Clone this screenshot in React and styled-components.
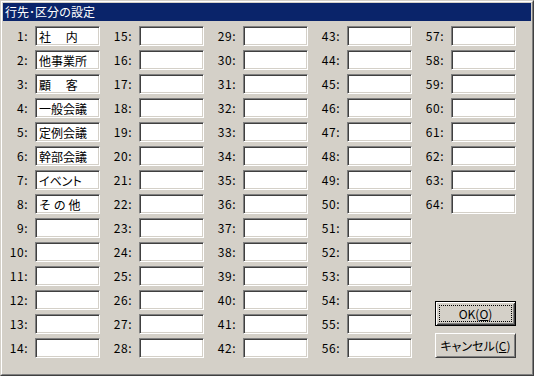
import React from 'react';
import styled, { createGlobalStyle } from 'styled-components';

const GlobalStyle = createGlobalStyle`
  html, body {
    margin: 0;
    padding: 0;
    background: #d4d0c8;
  }
  body {
    font-family: "Noto Sans CJK JP", "DejaVu Sans", sans-serif;
    font-size: 12px;
  }
`

const entries = {
    1: '社　 内',
    2: '他事業所',
    3: '顧　 客',
    4: '一般会議',
    5: '定例会議',
    6: '幹部会議',
    7: 'イベント',
    8: 'そ の 他',
}

// five columns: 1-14, 15-28, 29-42, 43-56, 57-64
const columns = [
    [1, 14],
    [15, 28],
    [29, 42],
    [43, 56],
    [57, 64],
]

const range = (a, b) => {
    const out = []
    for (let i = a; i <= b; i++) out.push(i)
    return out
}

function App() {
    return (
        <Window>
            <GlobalStyle />
            <Frame>
                <TitleBar>
                    <Title>行先･区分の設定</Title>
                </TitleBar>
                <Body>
                    {columns.map(([from, to], ci) => (
                        <Column key={ci}>
                            {range(from, to).map((n) => (
                                <Entry key={n}>
                                    <Label>{n}:</Label>
                                    <Field $kana={n === 7}>{entries[n] || ''}</Field>
                                </Entry>
                            ))}
                            {ci === 4 && (
                                <ButtonStack>
                                    <Button $default>
                                        <FocusRing>OK(<u>O</u>)</FocusRing>
                                    </Button>
                                    <Button>
                                        <Caption>キャンセル(<u>C</u>)</Caption>
                                    </Button>
                                </ButtonStack>
                            )}
                        </Column>
                    ))}
                </Body>
            </Frame>
        </Window>
    )
}

const Window = styled.div`
  width: 534px;
  height: 376px;
  box-sizing: border-box;
  border-style: solid;
  border-width: 1px;
  border-color: #d4d0c8 #404040 #404040 #d4d0c8;
  background: #d4d0c8;
`
const Frame = styled.div`
  height: 100%;
  box-sizing: border-box;
  border-style: solid;
  border-width: 1px;
  border-color: #ffffff #808080 #808080 #ffffff;
  padding: 1px;
  display: flex;
  flex-direction: column;
`
const TitleBar = styled.div`
  height: 18px;
  background: #0a246a;
  display: flex;
  align-items: center;
  padding-left: 2px;
`
const Title = styled.span`
  color: #ffffff;
  font-size: 12px;
  line-height: 14px;
`
const Body = styled.div`
  flex: 1;
  display: flex;
  gap: 7px;
  padding-top: 5px;
`
const Column = styled.div`
  width: 97px;
  height: 332px;
  display: flex;
  flex-direction: column;
  gap: 4px;
`
const Entry = styled.div`
  display: flex;
  align-items: center;
  height: 20px;
`
const Label = styled.div`
  width: 32px;
  box-sizing: border-box;
  padding-right: 7px;
  text-align: right;
  color: #000;
  font-size: 12px;
  line-height: 14px;
  letter-spacing: 0.5px;
`
const Field = styled.div`
  width: 65px;
  height: 20px;
  box-sizing: border-box;
  border-style: solid;
  border-width: 1px;
  border-color: #808080 #ffffff #ffffff #808080;
  box-shadow: inset 1px 1px #404040, inset -1px -1px #d4d0c8;
  background: #ffffff;
  padding: 2px 0 0 3px;
  font-size: 12px;
  line-height: 15px;
  color: #000;
  white-space: pre;
  overflow: hidden;
  font-feature-settings: ${(p) => (p.$kana ? '"palt"' : 'normal')};
`
const ButtonStack = styled.div`
  margin-top: auto;
  align-self: flex-end;
  display: flex;
  flex-direction: column;
  gap: 7px;
`
const Button = styled.div`
  width: 81px;
  height: 25px;
  box-sizing: border-box;
  display: flex;
  align-items: center;
  justify-content: center;
  background: #d4d0c8;
  color: #000;
  font-size: 12px;
  line-height: 14px;
  border-style: solid;
  border-width: 1px;
  border-color: ${(p) => (p.$default ? '#000 #000 #000 #000' : '#ffffff #404040 #404040 #ffffff')};
  box-shadow: ${(p) =>
        p.$default
            ? 'inset 1px 1px #ffffff, inset -1px -1px #404040, inset 2px 2px #d4d0c8, inset -2px -2px #808080'
            : 'inset 1px 1px #d4d0c8, inset -1px -1px #808080'};
  u {
    text-decoration: underline;
    text-underline-offset: 1px;
  }
`
const FocusRing = styled.span`
  width: 73px;
  height: 17px;
  box-sizing: border-box;
  border: 1px dotted #000;
  display: flex;
  align-items: center;
  justify-content: center;
`
const Caption = styled.span`
  font-feature-settings: "palt";
`

export default App;
